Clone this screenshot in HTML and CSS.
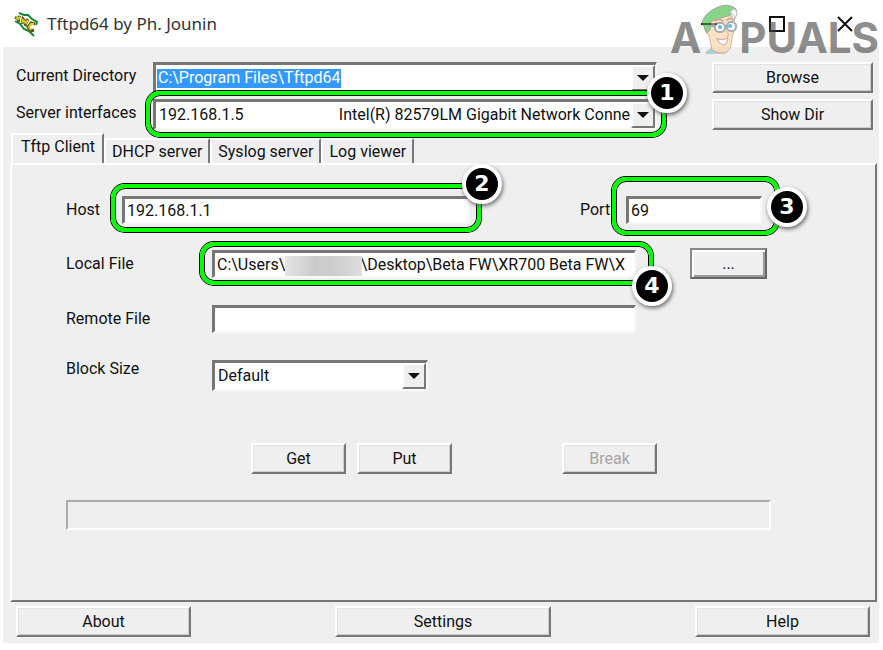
FILE: index.html
```
<!DOCTYPE html>
<html lang="en">
<head>
<meta charset="utf-8">
<title>Tftpd64 by Ph. Jounin</title>
<link rel="stylesheet" href="styles.css">
</head>
<body>
  <div class="window">
    <header class="titlebar">
      <svg class="app-icon" width="26" height="26" viewBox="0 0 26 26" fill="none">
        <path d="M2 10 L7 13 L11 18 L16 20 L21 25" stroke="#128a2c" stroke-width="2"/>
        <path d="M6 2 L11 4 L15 4 L19 8 L24 11 L23 14" stroke="#128a2c" stroke-width="2"/>
        <path d="M2 6 L5 8 L7 5 M5 8 L6 11 M9 13 L10 8 L13 12 L15 8 M13 12 L12 15 M22 13 L18 12 L15 16 L18 20 L21 19" stroke="#5a5716" stroke-width="3"/>
        <path d="M3 6 L5 8 L7 6 M9 12 L10 9 L13 12 L15 9 M21 13 L18 13 L16 16 L18 19" stroke="#d8cc28" stroke-width="2"/>
      </svg>
      <h1>Tftpd64 by Ph. Jounin</h1>
      <div class="window-buttons">
        <button type="button" aria-label="Minimize"><svg width="16" height="16" viewBox="0 0 16 16"><path d="M0 8H16" stroke="#111" stroke-width="2"/></svg></button>
        <button type="button" aria-label="Maximize"><svg width="16" height="16" viewBox="0 0 16 16"><path d="M1 1H15V15H1Z" fill="none" stroke="#111" stroke-width="2"/></svg></button>
        <button type="button" aria-label="Close"><svg width="16" height="16" viewBox="0 0 16 16"><path d="M1 1L15 15M15 1L1 15" stroke="#111" stroke-width="2"/></svg></button>
      </div>
      <div class="watermark">
        <span>A</span>
        <svg width="38" height="50" viewBox="0 0 38 50" stroke-linejoin="round" stroke-linecap="round">
          <path d="M5 49 Q8 44 12 45 L24 49Z" fill="#6fc4e8" stroke="#999" stroke-width="1"/>
          <path d="M5 20 Q3 29 8 31 L11 46 Q17 50 24 49 Q31 46 31 34 L33 26 L31 12 L20 12Z" fill="#fbd09a" stroke="#a58b78" stroke-width="1"/>
          <path d="M1 20 Q2 10 15 4 Q27 -2 35 5 Q37 10 34 14 Q34 8 29 11 Q20 14 10 17 L9 26 L6 29 Q3 25 3 22Z" fill="#3cb83c" stroke="#5b6c5b" stroke-width="1"/>
          <path d="M30 10 Q29 4 35 6 Q37 10 34 15 Q34 10 30 10Z" fill="#fff" stroke="#999" stroke-width="1"/>
          <path d="M14 17 Q18 14 22 17 M26 16 Q30 13 33 16" fill="none" stroke="#a77b56" stroke-width="2"/>
          <rect x="14" y="19" width="10" height="9" rx="4" fill="#fff" stroke="#667788" stroke-width="2"/>
          <rect x="26" y="18" width="9" height="9" rx="4" fill="#fff" stroke="#667788" stroke-width="2"/>
          <path d="M24 22H26M8 22H14" stroke="#667788" stroke-width="2"/>
          <circle cx="19" cy="23" r="2" fill="#0a80bf"/>
          <circle cx="29" cy="22" r="2" fill="#0a80bf"/>
          <path d="M25 27 Q30 31 26 33" fill="none" stroke="#a77b56" stroke-width="1"/>
          <path d="M16 35 Q22 37 27 34 Q26 41 22 41 Q18 40 16 35Z" fill="#fff" stroke="#8b7365" stroke-width="1"/>
        </svg>
        <span>PUALS</span>
      </div>
    </header>

    <main class="client">
      <div class="top">
        <label for="directory">Current Directory</label>
        <div class="combo">
          <input type="text" class="selected-text" id="directory" value="C:\Program Files\Tftpd64">
          <button type="button" class="drop" aria-label="Open list"></button>
        </div>
        <button type="button" class="btn">Browse</button>

        <label for="interfaces">Server interfaces</label>
        <div class="combo">
          <select id="interfaces">
            <option>192.168.1.5&nbsp;&nbsp;&nbsp;&nbsp;&nbsp;&nbsp;&nbsp;&nbsp;&nbsp;&nbsp;&nbsp;&nbsp;&nbsp;&nbsp;&nbsp;&nbsp;&nbsp;&nbsp;&nbsp;&nbsp;&nbsp;&nbsp;&nbsp;&nbsp;Intel(R) 82579LM Gigabit Network Conne</option>
          </select>
          <span class="drop"></span>
          <div class="mark mark-interfaces"><span class="badge">1</span></div>
        </div>
        <button type="button" class="btn">Show Dir</button>
      </div>

      <nav class="tabs">
        <button type="button" class="tab active">Tftp Client</button>
        <button type="button" class="tab">DHCP server</button>
        <button type="button" class="tab">Syslog server</button>
        <button type="button" class="tab">Log viewer</button>
      </nav>

      <section class="panel">
        <div class="row row-host">
          <label for="host">Host</label>
          <div class="field">
            <input type="text" id="host" value="192.168.1.1">
            <div class="mark mark-host"><span class="badge">2</span></div>
          </div>
          <label for="port" class="port-label">Port</label>
          <div class="field">
            <input type="text" id="port" value="69">
            <div class="mark mark-port"><span class="badge">3</span></div>
          </div>
        </div>
        <div class="row">
          <label for="local">Local File</label>
          <div class="field">
            <input type="text" id="local" value="C:\Users\&nbsp;&nbsp;&nbsp;&nbsp;&nbsp;&nbsp;&nbsp;&nbsp;&nbsp;&nbsp;&nbsp;&nbsp;&nbsp;&nbsp;&nbsp;&nbsp;&nbsp;&nbsp;&nbsp;\Desktop\Beta FW\XR700 Beta FW\X">
            <span class="hidden-name"></span>
            <div class="mark mark-local"><span class="badge">4</span></div>
          </div>
          <button type="button" class="btn btn-default">...</button>
        </div>
        <div class="row">
          <label for="remote">Remote File</label>
          <div class="field"><input type="text" id="remote"></div>
        </div>
        <div class="row row-block">
          <label for="block">Block Size</label>
          <div class="combo combo-small">
            <select id="block">
              <option>Default</option>
            </select>
            <span class="drop"></span>
          </div>
        </div>
        <div class="actions">
          <button type="button" class="btn">Get</button>
          <button type="button" class="btn">Put</button>
          <button type="button" class="btn btn-break" disabled>Break</button>
        </div>
        <div class="progress"></div>
      </section>

      <footer class="bottom">
        <button type="button" class="btn">About</button>
        <button type="button" class="btn">Settings</button>
        <button type="button" class="btn">Help</button>
      </footer>
    </main>
  </div>
</body>
</html>
```
FILE: styles.css
```
* {
  box-sizing: border-box;
}
body {
  margin: 0;
  background: #fff;
  color: #111;
  font: 16px/20px Roboto, "Liberation Sans", sans-serif;
}
button, input, select {
  font: inherit;
  color: inherit;
}
.window {
  display: flex;
  flex-direction: column;
  min-height: 100vh;
  padding: 0 4px 7px 3px;
}

/* title bar */
.titlebar {
  position: relative;
  display: flex;
  align-items: center;
  height: 47px;
  padding: 0 26px 0 10px;
}
.titlebar h1 {
  flex: 1;
  margin: 0 0 0 8px;
  font: 17px/24px "Noto Sans", "Open Sans", sans-serif;
  color: #333;
}
.window-buttons {
  display: flex;
  gap: 52px;
}
.window-buttons button {
  display: flex;
  padding: 0;
  border: none;
  background: none;
}
.watermark {
  position: absolute;
  z-index: 1;
  top: 4px;
  right: 0;
  display: flex;
  font: 700 42px/68px Inter, sans-serif;
  color: #444;
  opacity: 0.6;
  pointer-events: none;
}

/* classic raised and sunken controls */
.btn {
  height: 31px;
  padding: 0 8px;
  background: #efefef;
  border: 2px solid;
  border-color: #fff #777 #777 #fff;
  box-shadow: inset 1px 1px #e2e2e2, inset -1px -1px #ccc;
}
.btn:disabled {
  color: #a5a5a5;
}
.btn-default {
  border-color: #888 #666 #666 #888;
  box-shadow: inset 2px 2px #fff, inset -2px -2px #999;
}
.field {
  position: relative;
}
.field input {
  display: block;
  width: 100%;
  height: 28px;
  padding: 0 2px;
  background: #fff;
  border: 3px solid;
  border-width: 3px 2px 2px 3px;
  border-color: #777 #f8f8f8 #f8f8f8 #777;
  outline: none;
}
.combo {
  position: relative;
  display: flex;
  height: 31px;
  background: #fff;
  border: 3px solid;
  border-width: 3px 2px 2px 3px;
  border-color: #777 #f8f8f8 #f8f8f8 #777;
}
.combo select {
  flex: 1;
  min-width: 0;
  padding: 0 0 0 3px;
  border: none;
  background: none;
  appearance: none;
  outline: none;
}
.selected-text {
  field-sizing: content;
  align-self: center;
  height: 19px;
  margin-left: 1px;
  padding: 0 1px;
  border: none;
  background: #3399ff;
  color: #fff;
}
.drop {
  display: flex;
  align-items: center;
  justify-content: center;
  flex: none;
  width: 24px;
  margin-left: auto;
  padding: 0;
  background: #efefef;
  border: 2px solid;
  border-color: #fff #777 #777 #fff;
  pointer-events: none;
}
.drop::after {
  content: "";
  border: 6px solid transparent;
  border-top-color: #111;
  border-bottom: none;
}

/* client area */
.client {
  flex: 1;
  display: flex;
  flex-direction: column;
  padding: 15px 2px 6px 7px;
  background: #efefef;
}
.top {
  display: grid;
  grid-template-columns: 137px minmax(0, 1fr) 161px;
  row-gap: 6px;
  align-items: center;
  padding: 0 4px 0 6px;
}
.top .combo {
  margin-right: 55px;
}
.top label {
  padding-bottom: 4px;
}

/* tabs */
.tabs {
  display: flex;
  align-items: flex-end;
  height: 33px;
  padding-left: 1px;
}
.tab {
  height: 25px;
  padding: 0 6px;
  background: #efefef;
  border: 2px solid;
  border-color: #fff #777 transparent #fff;
  border-bottom: none;
}
.tab.active {
  height: 30px;
  padding: 0 7px 4px 8px;
}
.panel {
  flex: 1;
  padding: 31px 104px 20px 54px;
  border: 2px solid;
  border-color: #fff #777 #777 #fff;
}

/* form rows */
.row {
  display: grid;
  grid-template-columns: 146px minmax(0, 1fr) 81px;
  align-items: center;
  margin-bottom: 26px;
}
.row .field {
  margin-right: 54px;
}
.row .btn {
  width: 77px;
}
.row-host {
  grid-template-columns: 56px minmax(0, 1fr) 46px 145px;
  margin-bottom: 24px;
}
.row-host .field {
  margin-right: 110px;
}
.row-host .port-label + .field {
  margin-right: 9px;
}
.row-block label {
  padding-bottom: 12px;
}
.combo-small {
  width: 216px;
}
.actions {
  display: flex;
  gap: 11px;
  padding: 26px 114px 0 185px;
}
.actions .btn {
  width: 95px;
}
.actions .btn-break {
  margin-left: auto;
}
.progress {
  height: 30px;
  margin-top: 26px;
  border: 2px solid;
  border-color: #aaa #fff #fff #aaa;
}
.bottom {
  display: flex;
  justify-content: space-between;
  padding: 4px 7px 0 6px;
}
.bottom .btn {
  width: 175px;
}
.bottom .btn:nth-child(2) {
  width: 216px;
}

/* numbered marks */
.mark {
  position: absolute;
  z-index: 1;
  border: 4px solid #0f0;
  border-radius: 14px;
  box-shadow: 0 0 0 1px #000, inset 0 0 0 1px #000;
  pointer-events: none;
}
.mark-interfaces {
  inset: -11px -11px -9px -10px;
}
.mark-host {
  inset: -12px -11px -8px -11px;
}
.mark-port {
  inset: -19px -17px -11px -14px;
}
.mark-local {
  inset: -8px -17px -7px -12px;
}
.badge {
  position: absolute;
  top: -24px;
  right: -25px;
  width: 40px;
  height: 40px;
  border: 4px solid #fff;
  border-radius: 50%;
  background: #000;
  color: #fff;
  font: bold 22px/32px "DejaVu Sans", sans-serif;
  text-align: center;
  box-shadow: 1px 2px 4px #666;
}
.mark-interfaces .badge {
  top: -22px;
}
.mark-port .badge {
  top: 6px;
  right: -32px;
}
.mark-local .badge {
  top: 20px;
  right: -23px;
}
.hidden-name {
  position: absolute;
  top: 6px;
  left: 73px;
  width: 77px;
  height: 20px;
  background: linear-gradient(90deg, #e4e4e4, #cacaca 40%, #cfcfcf 70%, #dedede);
}
```
